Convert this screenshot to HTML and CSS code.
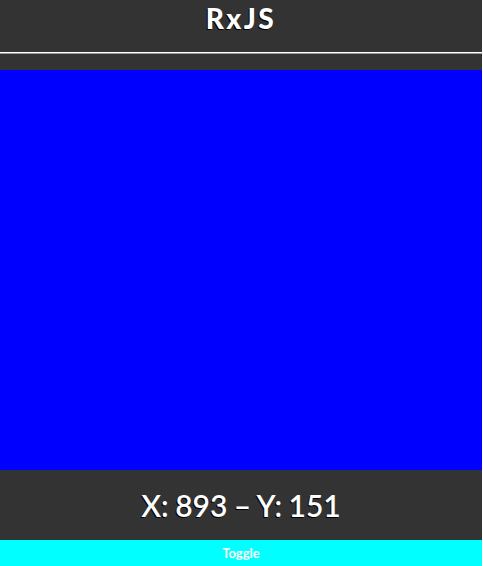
FILE: index.html
```html
<!DOCTYPE html>
<html>
<head>
<meta charset="utf-8">
<link rel="stylesheet" href="styles.css">
</head>
<body>
<div class="app">
  <header class="header">
    <h1 class="title">RxJS</h1>
  </header>
  <div class="rule"></div>
  <div class="spacer"></div>
  <div class="canvas"></div>
  <div class="coords">X: 893 – Y: 151</div>
  <button class="toggle">Toggle</button>
</div>
</body>
</html>
```

FILE: styles.css
```css
html, body {
  margin: 0;
  padding: 0;
  background: #ffffff;
}
.app {
  width: 482px;
  height: 566px;
  display: flex;
  flex-direction: column;
  background: #333333;
  font-family: "Lato", "Noto Sans", sans-serif;
  color: #ffffff;
}
.header {
  height: 52px;
  display: flex;
  justify-content: center;
  align-items: center;
}
.title {
  margin: 0;
  margin-top: -16px;
  font-size: 28px;
  font-weight: 900;
  letter-spacing: 2.5px;
  text-shadow: -1px 1px 0 #000;
}
.rule {
  height: 1px;
  background: #ffffff;
  border-bottom: 1px solid #999;
}
.spacer {
  height: 16px;
}
.canvas {
  height: 400px;
  background: #0000ff;
}
.coords {
  height: 70px;
  display: flex;
  justify-content: center;
  align-items: center;
  font-size: 30px;
  font-weight: 600;
  word-spacing: -1px;
  text-shadow: -1px 1px 0 #000;
}
.toggle {
  height: 26px;
  border: none;
  margin: 0;
  padding: 0;
  background: #00ffff;
  color: #ffffff;
  font-family: "Lato", "Noto Sans", sans-serif;
  font-size: 13px;
  font-weight: 700;
  width: 100%;
}
```
